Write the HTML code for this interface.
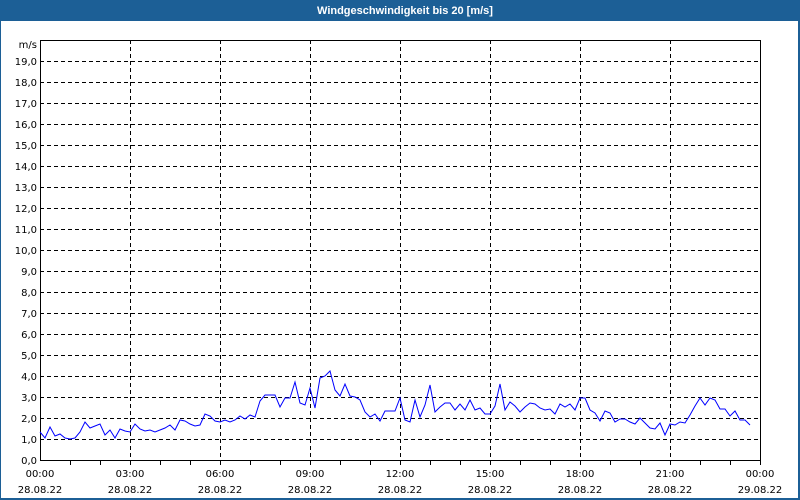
<!DOCTYPE html>
<html><head><style>
body{margin:0;width:800px;height:500px;overflow:hidden;background:#fff;font-family:"DejaVu Sans","Liberation Sans",sans-serif}
</style></head><body>
<svg width="800" height="500" xmlns="http://www.w3.org/2000/svg" style="display:block">
<rect x="0" y="0" width="800" height="500" fill="#1c5f96"/>
<rect x="1" y="21" width="797" height="477" fill="#fff"/>
<text x="405" y="14" fill="#fff" font-size="11" font-weight="bold" text-anchor="middle" font-family="Liberation Sans,sans-serif">Windgeschwindigkeit bis 20 [m/s]</text>
<g stroke="#000" stroke-dasharray="4,3" stroke-width="1" shape-rendering="crispEdges">
<path d="M40 439.5H760M40 418.5H760M40 397.5H760M40 376.5H760M40 355.5H760M40 334.5H760M40 313.5H760M40 292.5H760M40 271.5H760M40 250.5H760M40 229.5H760M40 208.5H760M40 187.5H760M40 166.5H760M40 145.5H760M40 124.5H760M40 103.5H760M40 82.5H760M40 61.5H760"/>
<path d="M130.5 40V460M220.5 40V460M310.5 40V460M400.5 40V460M490.5 40V460M580.5 40V460M670.5 40V460"/>
</g>
<g stroke="#000" fill="none" shape-rendering="crispEdges">
<rect x="40.5" y="40.5" width="720" height="420"/>
<path d="M70.5 460V465M100.5 460V465M130.5 460V465M160.5 460V465M190.5 460V465M220.5 460V465M250.5 460V465M280.5 460V465M310.5 460V465M340.5 460V465M370.5 460V465M400.5 460V465M430.5 460V465M460.5 460V465M490.5 460V465M520.5 460V465M550.5 460V465M580.5 460V465M610.5 460V465M640.5 460V465M670.5 460V465M700.5 460V465M730.5 460V465M760.5 460V465"/>
</g>
<g font-size="10" fill="#000" text-anchor="end">
<text x="37" y="48">m/s</text>
<text x="37" y="65">19,0</text><text x="37" y="86">18,0</text><text x="37" y="107">17,0</text><text x="37" y="128">16,0</text><text x="37" y="149">15,0</text><text x="37" y="170">14,0</text><text x="37" y="191">13,0</text><text x="37" y="212">12,0</text><text x="37" y="233">11,0</text><text x="37" y="254">10,0</text><text x="37" y="275">9,0</text><text x="37" y="296">8,0</text><text x="37" y="317">7,0</text><text x="37" y="338">6,0</text><text x="37" y="359">5,0</text><text x="37" y="380">4,0</text><text x="37" y="401">3,0</text><text x="37" y="422">2,0</text><text x="37" y="443">1,0</text><text x="37" y="464">0,0</text>
</g>
<g font-size="10" fill="#000" text-anchor="middle">
<text x="40" y="477">00:00</text><text x="40" y="493">28.08.22</text>
<text x="130" y="477">03:00</text><text x="130" y="493">28.08.22</text>
<text x="220" y="477">06:00</text><text x="220" y="493">28.08.22</text>
<text x="310" y="477">09:00</text><text x="310" y="493">28.08.22</text>
<text x="400" y="477">12:00</text><text x="400" y="493">28.08.22</text>
<text x="490" y="477">15:00</text><text x="490" y="493">28.08.22</text>
<text x="580" y="477">18:00</text><text x="580" y="493">28.08.22</text>
<text x="670" y="477">21:00</text><text x="670" y="493">28.08.22</text>
<text x="760" y="477">00:00</text><text x="760" y="493">29.08.22</text>
</g>
<polyline fill="none" stroke="#0000ff" stroke-width="1" points="40,432 45,438 50,427 55,436 60,434 65,438 70,439 75,438 80,432 85,422 90,428 95,426 100,424 105,435 110,430 115,438 120,429 125,431 130,432 135,424 140,429 145,431 150,430 155,432 160,430 165,428 170,425 175,430 180,420 185,421 190,424 195,426 200,425 205,414 210,416 215,421 220,422 225,420 230,422 235,420 240,416 245,419 250,415 255,417 260,401 265,395 270,395 275,395 280,407 285,398 290,398 295,382 300,403 305,405 310,388 315,408 320,378 325,376 330,371 335,390 340,396 345,384 350,396 355,397 360,400 365,412 370,417 375,414 380,421 385,411 390,411 395,411 400,398 405,420 410,422 415,400 420,417 425,405 430,385 435,412 440,407 445,403 450,403 455,410 460,404 465,410 470,400 475,410 480,408 485,414 490,414 495,406 500,384 505,410 510,402 515,406 520,412 525,407 530,403 535,404 540,408 545,410 550,409 555,414 560,404 565,407 570,404 575,410 580,398 585,398 590,410 595,413 600,421 605,411 610,413 615,422 620,419 625,419 630,422 635,424 640,418 645,423 650,428 655,429 660,423 665,435 670,424 675,425 680,422 685,423 690,415 695,406 700,398 705,405 710,398 715,400 720,409 725,409 730,416 735,411 740,420 745,420 750,425"/>
</svg>
</body></html>
